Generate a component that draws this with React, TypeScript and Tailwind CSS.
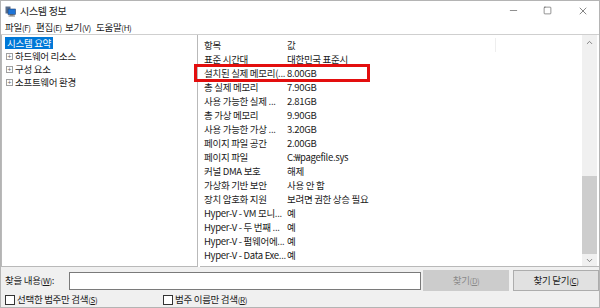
import { Minus, Square, X, ChevronUp, ChevronDown } from 'lucide-react'

const rows: [string, string][] = [
  ['표준 시간대', '대한민국 표준시'],
  ['설치된 실제 메모리(...', '8.00GB'],
  ['총 실제 메모리', '7.90GB'],
  ['사용 가능한 실제 ...', '2.81GB'],
  ['총 가상 메모리', '9.90GB'],
  ['사용 가능한 가상 ...', '3.20GB'],
  ['페이지 파일 공간', '2.00GB'],
  ['페이지 파일', 'C:\u20A9pagefile.sys'],
  ['커널 DMA 보호', '해제'],
  ['가상화 기반 보안', '사용 안 함'],
  ['장치 암호화 지원', '보려면 권한 상승 필요'],
  ['Hyper-V - VM 모니...', '예'],
  ['Hyper-V - 두 번째 ...', '예'],
  ['Hyper-V - 펌웨어에...', '예'],
  ['Hyper-V - Data Exe...', '예'],
]

const tree = ['하드웨어 리소스', '구성 요소', '소프트웨어 환경']

function AppIcon() {
  return (
    <svg width="11" height="11" viewBox="0 0 11 11">
      <rect x="0.5" y="0.5" width="5" height="7" fill="#5a6e8c" />
      <rect x="3" y="3" width="7.5" height="5.5" fill="#1e74d6" stroke="#26406a" strokeWidth="0.6" />
      <rect x="5" y="8.5" width="3.5" height="1" fill="#555" />
      <rect x="3.5" y="9.5" width="6.5" height="1" fill="#777" />
    </svg>
  )
}

// mnemonic "(X)" suffix, drawn a touch smaller like the Windows UI font does
function Key({ k, u }: { k: string; u?: boolean }) {
  return (
    <span className="text-[8px] tracking-[-0.4px]">
      (<span className={u ? 'underline' : ''}>{k}</span>)
    </span>
  )
}

export default function App() {
  return (
    <div
      className="flex h-[308px] w-[600px] flex-col overflow-hidden border border-[#b4b4b4] bg-[#f0f0f0] text-[9.5px] tracking-[-0.3px] text-[#1a1a1a]"
      style={{ fontFamily: '"Noto Sans CJK KR", "Noto Sans", sans-serif' }}
    >
      {/* title */}
      <div className="flex h-[19px] shrink-0 items-center bg-white">
        <div className="ml-[4px] mt-[1px]">
          <AppIcon />
        </div>
        <span className="ml-[4px] text-[10px]">시스템 정보</span>
        <div className="ml-auto flex items-center text-[#333]">
          <Minus size={11} strokeWidth={1.2} className="mr-[24px]" />
          <Square size={9} strokeWidth={1.4} className="mr-[25px]" />
          <X size={12} strokeWidth={1.2} className="mr-[10px]" />
        </div>
      </div>

      {/* menu */}
      <div className="flex h-[14px] shrink-0 items-center whitespace-nowrap bg-white pl-[4px]">
        <span className="w-[31px] shrink-0">파일<Key k="F" /></span>
        <span className="w-[29px] shrink-0">편집<Key k="E" /></span>
        <span className="w-[31px] shrink-0">보기<Key k="V" /></span>
        <span>도움말<Key k="H" /></span>
      </div>

      {/* panes */}
      <div className="flex h-[233px] shrink-0 border-t border-[#cfcfcf] bg-white">
        <div className="w-[197px] shrink-0 border-x border-b border-[#b9b9b9] pt-[1px]">
          <div className="ml-[3px] mt-[1px] inline-block h-[12px] bg-[#0078d7] px-[2px] leading-[12px] text-white">
            시스템 요약
          </div>
          {tree.map((t) => (
            <div key={t} className="flex h-[13px] items-center leading-[13px]">
              <span className="ml-[4px] mr-[2px] flex h-[7px] w-[7px] items-center justify-center border border-[#a0a0a0] text-[7px] leading-none tracking-normal text-[#666]">
                +
              </span>
              {t}
            </div>
          ))}
        </div>

        <div className="ml-[2px] flex min-w-0 flex-1 border-b border-[#b9b9b9]">
          <div className="relative min-w-0 flex-1 pt-[3px]">
            <div className="flex h-[14px] items-center leading-[14px]">
              <span className="w-[87px] shrink-0 pl-[4px]">항목</span>
              <span className="w-[208px] shrink-0">값</span>
              <span className="h-[14px] w-px bg-[#eeeeee]" />
            </div>
            {rows.map(([k, v]) => (
              <div key={k} className="flex h-[14px] items-center whitespace-nowrap leading-[14px]">
                <span className="w-[87px] shrink-0 overflow-hidden pl-[4px]">{k}</span>
                <span>{v}</span>
              </div>
            ))}
            <div className="absolute left-[-6px] top-[29px] h-[18px] w-[176px] border-[3px] border-[#e30e0e]" />
          </div>

          {/* scrollbar */}
          <div className="flex w-[15px] shrink-0 flex-col bg-[#f0f0f0]">
            <div className="flex h-[14px] items-center justify-center text-[#606060]">
              <ChevronUp size={9} strokeWidth={2} />
            </div>
            <div className="flex-1" />
            <div className="h-[78px] bg-[#cdcdcd]" />
            <div className="flex h-[12px] items-center justify-center text-[#606060]">
              <ChevronDown size={9} strokeWidth={2} />
            </div>
          </div>
          <div className="w-[2px] shrink-0 bg-white" />
        </div>
      </div>

      {/* find bar */}
      <div className="flex h-[25px] shrink-0 items-center pl-[4px] pt-[2px]">
        <span className="w-[64px] shrink-0 whitespace-nowrap">
          찾을 내용<Key k="W" u />:
        </span>
        <div className="h-[18px] w-[352px] shrink-0 border border-[#7a7a7a] bg-white" />
        <div className="ml-[2px] flex h-[21px] w-[86px] shrink-0 items-center justify-center bg-[#cccccc] text-[#8a8a8a]">
          찾기<Key k="D" u />
        </div>
        <div className="ml-[4px] flex h-[21px] w-[86px] shrink-0 items-center justify-center border border-[#adadad] bg-[#e1e1e1]">
          찾기 닫기<Key k="C" u />
        </div>
      </div>
      <div className="flex flex-1 items-center pl-[4px]">
        <span className="mr-[2px] h-[10px] w-[10px] shrink-0 border border-[#333] bg-white" />
        <span className="w-[146px] shrink-0">
          선택한 범주만 검색<Key k="S" u />
        </span>
        <span className="mr-[2px] h-[10px] w-[10px] shrink-0 border border-[#333] bg-white" />
        <span>
          범주 이름만 검색<Key k="R" u />
        </span>
      </div>
    </div>
  )
}
